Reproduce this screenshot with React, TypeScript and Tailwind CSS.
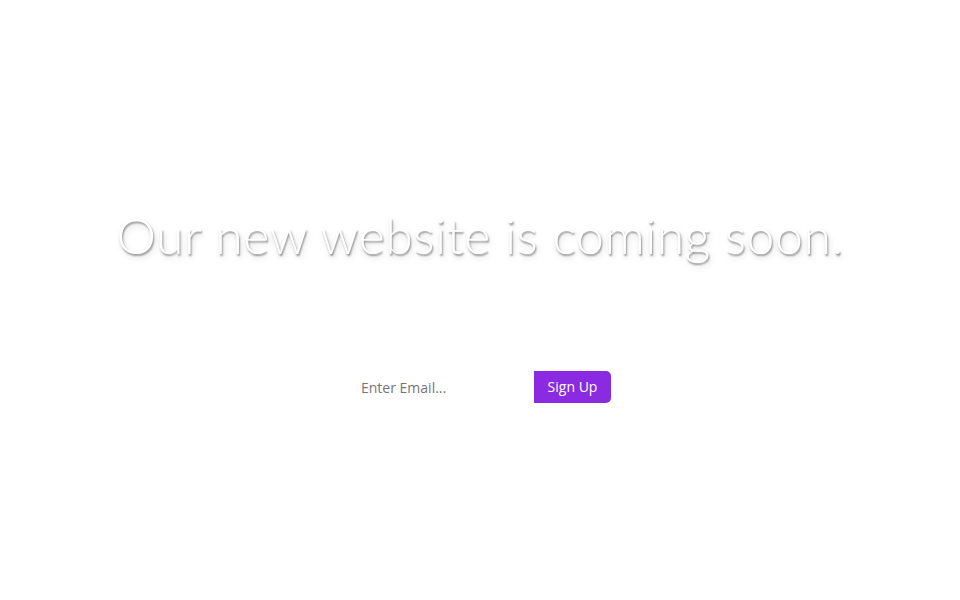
export default function App() {
  return (
    <div className="flex h-[600px] w-full flex-col items-center bg-white">
      <h1
        className="mt-[205px] text-center text-[50px] font-light leading-[60px] tracking-[0.5px] text-white [font-family:Lato,'Open_Sans',sans-serif] [text-shadow:1px_2px_2px_rgba(0,0,0,0.4),2px_4px_6px_rgba(0,0,0,0.15)]"
      >
        Our new website is coming soon.
      </h1>
      <form className="mt-[106px] flex items-stretch" onSubmit={(e) => e.preventDefault()}>
        <input
          type="email"
          placeholder="Enter Email..."
          className="h-8 w-[185px] bg-transparent px-3 text-sm text-gray-700 outline-none placeholder:text-[#757575] [font-family:'Open_Sans',sans-serif]"
        />
        <button
          type="submit"
          className="h-8 w-[77px] rounded-r-[5px] bg-[#8a2be2] text-sm text-white [font-family:'Open_Sans',sans-serif]"
        >
          Sign Up
        </button>
      </form>
    </div>
  );
}
